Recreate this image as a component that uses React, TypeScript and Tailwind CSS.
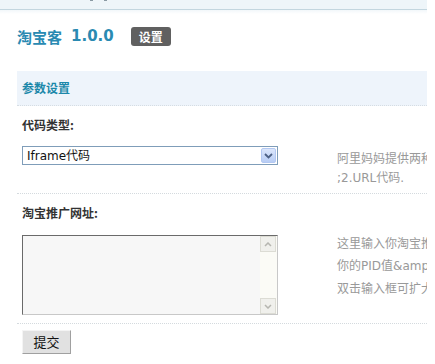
import React from "react";

const cjk = { fontFamily: '"Noto Sans CJK SC", "Noto Sans", sans-serif' };
const verd = { fontFamily: '"DejaVu Sans", "Noto Sans CJK SC", sans-serif' };

export default function App() {
  return (
    <div className="w-[435px] h-[364px] overflow-hidden bg-white relative" style={cjk}>
      {/* top band */}
      <div className="w-[427px] h-[10px] bg-[#eef5f9] border-b border-[#c3d6df] relative">
        <span className="absolute left-[90px] top-[-2px] w-[3px] h-[3px] bg-[#8a9aa4]" />
        <span className="absolute left-[104px] top-[-2px] w-[3px] h-[3px] bg-[#8a9aa4]" />
      </div>
      <div className="w-[427px] h-[4px] bg-gradient-to-b from-[#f2f7fa] to-white" />

      <div className="pl-[17px] w-[427px]">
        {/* title */}
        <div className="flex items-center h-[19px] mt-[13px]">
          <span className="text-[15px] font-bold text-[#2a8ab2] leading-none">淘宝客</span>
          <span className="text-[15px] font-bold text-[#2a8ab2] leading-none ml-[9px]" style={verd}>1.0.0</span>
          <span className="ml-[17px] h-[19px] w-[40px] rounded-[3px] bg-[#606060] text-white text-[12px] font-bold flex items-center justify-center leading-none">设置</span>
        </div>

        {/* section header */}
        <div className="mt-[25px] h-[35px] bg-[#eef4fb] border-b border-dotted border-[#d6dde3] flex items-center pl-[5px]">
          <span className="text-[12px] font-bold text-[#1c88aa]">参数设置</span>
        </div>

        {/* row 1 */}
        <div className="pl-[5px] pt-[12px] h-[88px] border-b border-dotted border-[#d4dade]">
          <div className="text-[12px] font-bold text-[#333] leading-[14px]">代码类型:</div>
          <div className="flex mt-[14px]">
            <div className="w-[256px] h-[19px] border border-[#7f9db9] bg-white flex items-center justify-between shrink-0">
              <span className="text-[12px] text-[#111] pl-[4px] leading-none" style={verd}>Iframe代码</span>
              <span className="w-[15px] h-[15px] mr-[1px] rounded-[2px] bg-gradient-to-b from-[#dbe6fb] to-[#b8cdf5] border border-[#b3c8f2] flex items-center justify-center">
                <svg width="9" height="6" viewBox="0 0 9 6"><path d="M1 1 L4.5 4.5 L8 1" stroke="#4d6185" strokeWidth="1.8" fill="none" /></svg>
              </span>
            </div>
            <div className="ml-[59px] text-[12px] text-[#999] leading-[21px] mt-[1px] whitespace-nowrap">
              <div>阿里妈妈提供两种代码类型:1.Iframe代码</div>
              <div style={verd}>;2.URL代码.</div>
            </div>
          </div>
        </div>

        {/* row 2 */}
        <div className="pl-[5px] pt-[12px] h-[130px] border-b border-dotted border-[#d4dade]">
          <div className="text-[12px] font-bold text-[#333] leading-[14px]">淘宝推广网址:</div>
          <div className="flex mt-[15px]">
            <div className="w-[256px] h-[80px] border border-[#6a6a6a] border-r-[#c8c8c8] border-b-[#c8c8c8] bg-[#f7f7f7] flex justify-end shrink-0">
              <div className="w-[17px] h-full bg-[#fbfbf6] flex flex-col justify-between">
                <div className="w-[16px] h-[16px] bg-[#f0f0ec] border border-[#dcdcd4] flex items-center justify-center">
                  <svg width="8" height="5" viewBox="0 0 8 5"><path d="M1 4 L4 1 L7 4" stroke="#b6b6b0" strokeWidth="1.5" fill="none" /></svg>
                </div>
                <div className="w-[16px] h-[16px] bg-[#f0f0ec] border border-[#dcdcd4] flex items-center justify-center">
                  <svg width="8" height="5" viewBox="0 0 8 5"><path d="M1 1 L4 4 L7 1" stroke="#b6b6b0" strokeWidth="1.5" fill="none" /></svg>
                </div>
              </div>
            </div>
            <div className="ml-[59px] mt-[-3px] text-[12px] text-[#999] leading-[22px] whitespace-nowrap">
              <div>这里输入你淘宝推广的网址</div>
              <div><span>你的</span><span style={verd}>PID</span><span>值</span><span style={verd}>&amp;amp;</span></div>
              <div>双击输入框可扩大</div>
            </div>
          </div>
        </div>

        {/* submit */}
        <div className="pl-[5px] pt-[6px]">
          <button className="w-[49px] h-[24px] bg-[#e1e1e1] border border-[#a0a0a0] border-t-[#f4f4f4] border-l-[#f4f4f4] text-[13px] text-[#111] flex items-center justify-center">提交</button>
        </div>
      </div>

      <div className="absolute right-0 top-0 w-[8px] h-full bg-white" />
    </div>
  );
}
